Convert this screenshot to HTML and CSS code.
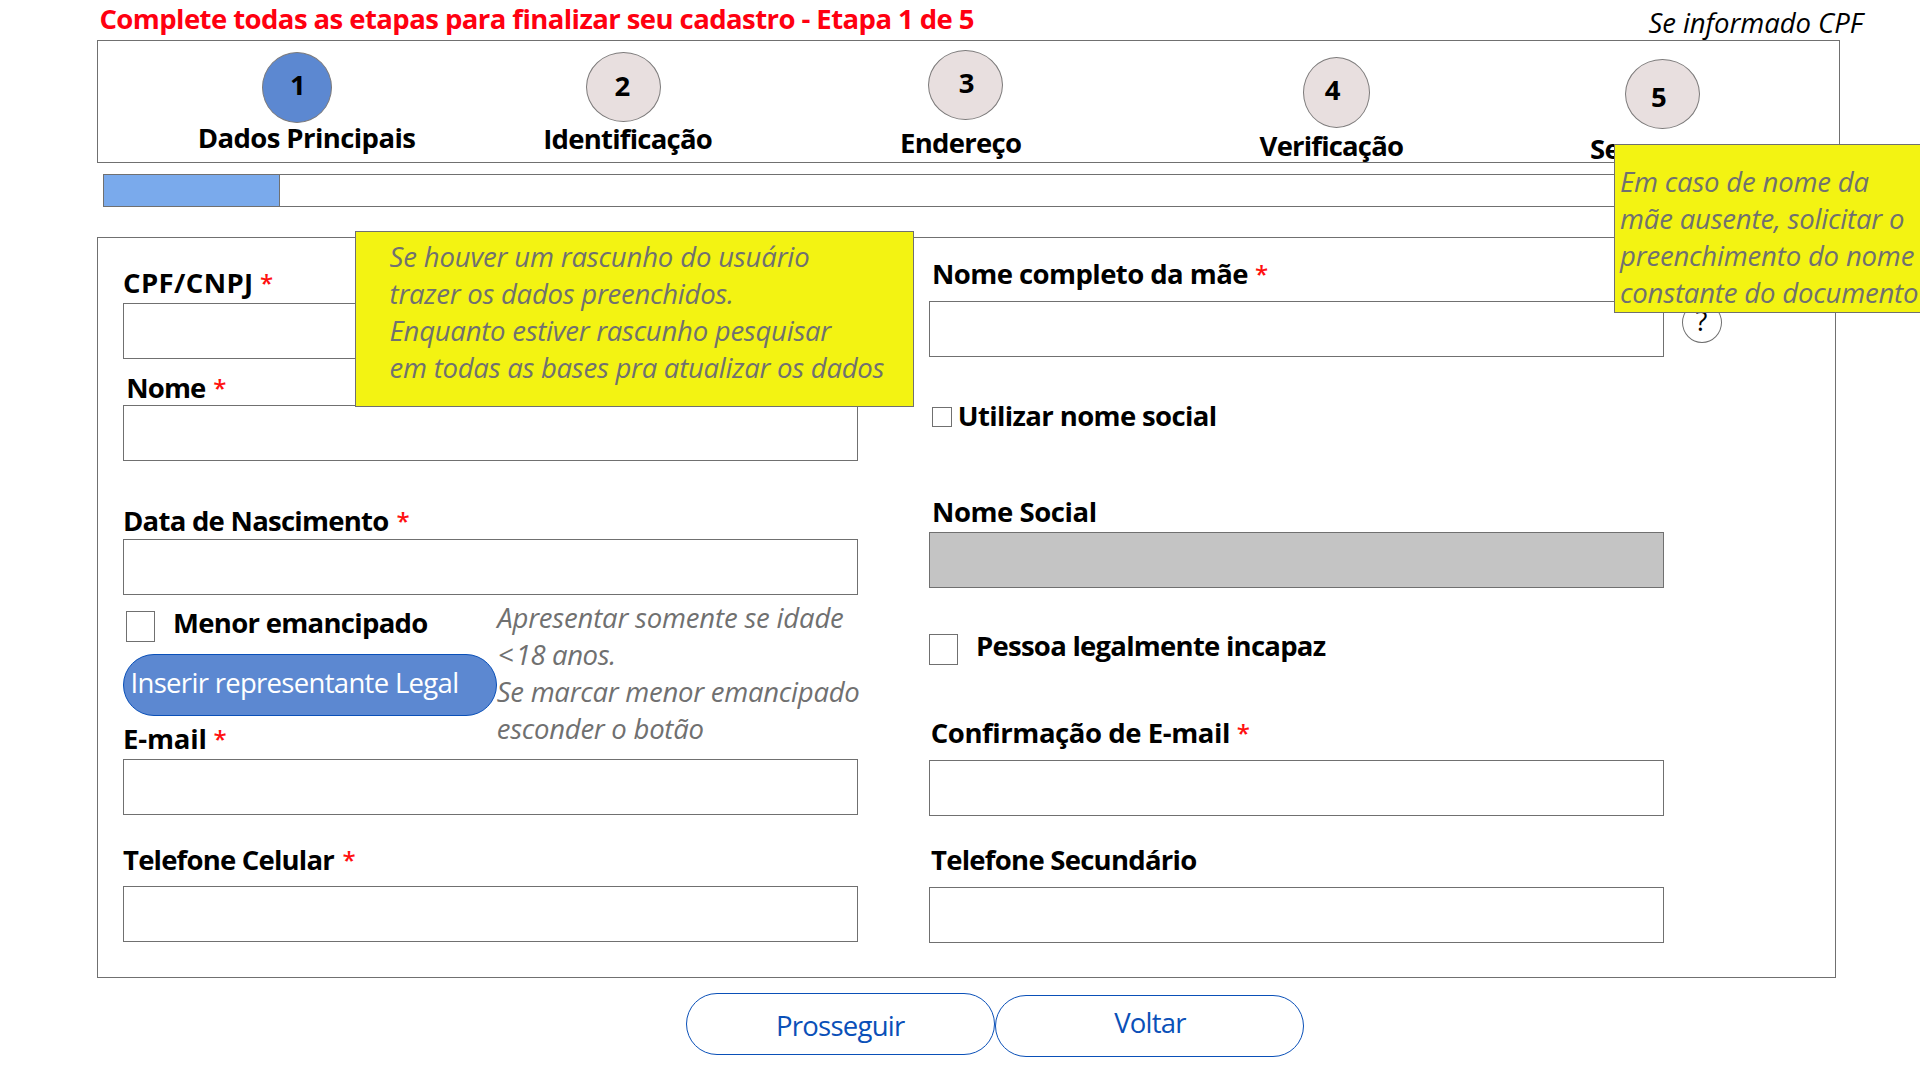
FILE: index.html
```html
<!DOCTYPE html>
<html lang="pt-BR">
<head>
<meta charset="utf-8">
<title>Cadastro - Etapa 1 de 5</title>
<link rel="stylesheet" href="styles.css">
</head>
<body>
<header class="header">
  <h1 class="title">Complete todas as etapas para finalizar seu cadastro - Etapa 1 de 5</h1>
  <p class="hint">Se informado CPF</p>
</header>

<ol class="stepper">
  <li class="step step-dados"><span class="circle active">1</span><span class="step-name">Dados Principais</span></li>
  <li class="step step-identificacao"><span class="circle">2</span><span class="step-name">Identificação</span></li>
  <li class="step step-endereco"><span class="circle">3</span><span class="step-name">Endereço</span></li>
  <li class="step step-verificacao"><span class="circle">4</span><span class="step-name">Verificação</span></li>
  <li class="step step-seguranca"><span class="circle">5</span><span class="step-name">Segurança</span></li>
</ol>

<div class="progress"><div class="progress-fill"></div></div>

<main class="panel">
  <div class="column">
    <div class="label cpf">CPF/CNPJ <span class="req">*</span></div>
    <div class="input after-cpf"></div>
    <div class="label nome">Nome <span class="req">*</span></div>
    <div class="input after-nome"></div>
    <div class="label nascimento">Data de Nascimento <span class="req">*</span></div>
    <div class="input"></div>
    <div class="check-row emancipado"><span class="check"></span><span class="label">Menor emancipado</span></div>
    <div class="button representante">Inserir representante Legal</div>
    <div class="label email">E-mail <span class="req">*</span></div>
    <div class="input after-email"></div>
    <div class="label celular">Telefone Celular <span class="req">*</span></div>
    <div class="input after-celular"></div>
  </div>
  <div class="column">
    <div class="label mae">Nome completo da mãe <span class="req">*</span></div>
    <div class="input-row"><div class="input"></div><span class="help">?</span></div>
    <div class="check-row usa-social"><span class="check small"></span><span class="label">Utilizar nome social</span></div>
    <div class="label social">Nome Social</div>
    <div class="input disabled"></div>
    <div class="check-row incapaz"><span class="check"></span><span class="label">Pessoa legalmente incapaz</span></div>
    <div class="label confirmacao">Confirmação de E-mail <span class="req">*</span></div>
    <div class="input after-right"></div>
    <div class="label secundario">Telefone Secundário</div>
    <div class="input after-right"></div>
  </div>
</main>

<footer class="actions">
  <div class="button prosseguir">Prosseguir</div>
  <div class="button voltar">Voltar</div>
</footer>

<aside class="note note-idade"><span class="l1">Apresentar somente se idade</span><br><span class="l2"><span class="lt">&lt;</span> 18 anos.</span><br>Se marcar menor emancipado<br>esconder o botão</aside>
<aside class="note sticky note-rascunho"><span class="l1">Se houver um rascunho do usuário</span><br>trazer os dados preenchidos.<br>Enquanto estiver rascunho pesquisar<br>em todas as bases pra atualizar os dados</aside>
<aside class="note sticky note-mae">Em caso de nome da<br>mãe ausente, solicitar o<br>preenchimento do nome<br>constante do documento</aside>
</body>
</html>
```
FILE: styles.css
```css
* { box-sizing: border-box; }

body {
  position: relative;
  width: 1920px;
  height: 1080px;
  margin: 0;
  overflow: hidden;
  background: #fff;
  color: #000;
  font: 27.5px/37px "Open Sans", "Noto Sans", sans-serif;
  white-space: nowrap;
}

/* Header */
.header { display: flex; height: 40px; padding-left: 99.4px; }
.title {
  width: 1549px;
  margin: 0;
  color: #ff0010;
  font-size: inherit;
  font-weight: 700;
  letter-spacing: -0.57px;
}
.hint { margin: 4px 0 0; font-style: italic; letter-spacing: -0.06px; }

/* Stepper */
.stepper {
  display: grid;
  grid-template-columns: 346.1px 356.3px 360px 330.4px 1fr;
  width: 1743px;
  height: 123px;
  margin: 0 0 0 97px;
  padding: 0 0 0 99.2px;
  border: 1px solid #707070;
  list-style: none;
  font-weight: 700;
}
.step { display: flex; flex-direction: column; align-items: flex-start; }
.circle {
  flex: none;
  width: 75px;
  height: 70px;
  border: 1px solid #7d7b7b;
  border-radius: 50%;
  background: #e8dfdf;
}
.circle.active { background: #5c88d1; }
.step-dados .circle { width: 70px; height: 71px; margin: 11px 0 -4px 64.8px; padding: 13px 0 0 27px; }
.step-identificacao .circle { margin: 11px 0 -2px 42.7px; padding: 14px 0 0 27.5px; }
.step-endereco .circle { margin: 9px 0 4px 28.4px; padding: 13px 0 0 29.8px; }
.step-verificacao .circle { width: 67px; height: 71px; margin: 16px 0 -1px 43.7px; padding: 13px 0 0 20.5px; }
.step-seguranca .circle { margin: 18px 0 1px 35px; padding: 18px 0 0 25px; }
.step-dados .step-name { margin-left: 0.5px; letter-spacing: -0.59px; }
.step-identificacao .step-name { letter-spacing: -0.77px; }
.step-endereco .step-name { margin-left: 0.5px; letter-spacing: -0.74px; }
.step-verificacao .step-name { letter-spacing: -0.82px; }
.step-seguranca .step-name { letter-spacing: -0.7px; }

/* Progress */
.progress {
  width: 1731px;
  height: 33px;
  margin: 11px 0 30px 103px;
  border: 1px solid #707070;
}
.progress-fill { width: 176px; height: 100%; border-right: 1px solid #707070; background: #7aaaec; }

/* Form */
.panel {
  display: grid;
  grid-template-columns: 806px 735px;
  width: 1739px;
  height: 741px;
  margin-left: 97px;
  padding-left: 25px;
  border: 1px solid #707070;
}
.column { display: flex; flex-direction: column; align-items: flex-start; }
.label { font-weight: 700; }
.req {
  color: #ff1010;
  font-size: 24px;
  font-weight: 600;
  line-height: 0;
  vertical-align: 1px;
}
.input {
  flex: none;
  width: 735px;
  height: 56px;
  border: 1px solid #707070;
  background: #fff;
}
.input.disabled { margin-top: 2px; background: #c4c4c4; }
.input-row { display: flex; margin-top: 9px; }
.after-cpf, .after-email { margin-top: 2px; }
.after-nome { margin-top: -1px; }
.after-celular { margin-top: 8px; }
.after-right { margin-top: 9px; }

.cpf { margin-top: 26px; letter-spacing: 0.38px; }
.cpf .req { margin-left: -1.2px; }
.nome { margin: 10px 0 0 3.3px; letter-spacing: -0.9px; }
.nome .req { margin-left: 1.6px; }
.nascimento { margin-top: 41px; letter-spacing: -0.74px; }
.nascimento .req { margin-left: 1.6px; }
.email { margin-top: 4px; letter-spacing: -0.13px; }
.email .req { margin-left: -0.3px; }
.celular { margin-top: 26px; letter-spacing: -0.8px; }
.celular .req { margin-left: 2.2px; }
.mae { margin: 17px 0 0 3px; letter-spacing: -0.56px; }
.mae .req { margin-left: 0.4px; }
.social { margin: 59px 0 0 3px; letter-spacing: -0.44px; }
.confirmacao { margin: 49px 0 0 1.7px; letter-spacing: -0.42px; }
.secundario { margin: 25px 0 0 2px; letter-spacing: -0.74px; }

.check-row { display: flex; align-items: flex-start; height: 38px; }
.check { width: 29px; height: 31px; margin-top: 7px; border: 1px solid #707070; background: #fff; }
.check.small { width: 20px; height: 20px; margin-top: 10px; }
.emancipado { gap: 18px; margin: 9px 0 0 3px; }
.emancipado .label { letter-spacing: -0.7px; }
.usa-social { gap: 5.8px; height: 37px; margin: 40px 0 0 3px; }
.usa-social .label { letter-spacing: -0.63px; }
.incapaz { gap: 18px; margin-top: 39px; }
.incapaz .label { letter-spacing: -0.75px; }

.help {
  width: 40px;
  height: 41px;
  margin: 1px 0 0 18px;
  padding-left: 12.5px;
  border: 1px solid #707070;
  border-radius: 50%;
  line-height: 35px;
}

/* Buttons */
.button {
  width: 309px;
  height: 62px;
  border: 1px solid #0a50b8;
  border-radius: 31px;
  color: #0a50b8;
}
.representante {
  width: 374px;
  margin-top: 12px;
  padding: 9px 0 0 6.5px;
  background: #5c88d1;
  color: #fff;
  letter-spacing: -0.69px;
}
.actions { display: flex; gap: 0.2px; margin: 15px 0 0 686px; }
.prosseguir { padding: 13px 0 0 89px; letter-spacing: -0.75px; }
.voltar { margin-top: 2px; padding: 8px 0 0 118px; letter-spacing: -0.8px; }

/* Annotations laid over the form */
.note { position: absolute; color: #707070; font-style: italic; letter-spacing: -0.25px; }
.sticky { border: 1px solid #707070; background: #f3f312; }
.note-idade { left: 496.7px; top: 599px; }
.note-idade .l1 { margin-left: 0.5px; letter-spacing: -0.18px; }
.note-idade .l2 { margin-left: 1px; letter-spacing: -0.4px; }
.note-idade .lt { margin-right: -4px; }
.note-rascunho { left: 355px; top: 231px; width: 559px; height: 176px; padding: 6px 0 0 33.6px; }
.note-rascunho .l1 { letter-spacing: -0.16px; }
.note-mae { left: 1614px; top: 144px; width: 320px; height: 169px; padding: 18px 0 0 5px; letter-spacing: -0.18px; }
```
